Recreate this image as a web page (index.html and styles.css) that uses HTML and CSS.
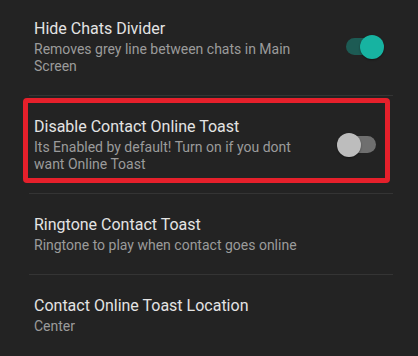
FILE: index.html
```html
<!DOCTYPE html>
<html lang="en">
<head>
<meta charset="UTF-8" />
<meta name="viewport" content="width=device-width, initial-scale=1" />
<title>Contact Online Toast Settings</title>
<link rel="stylesheet" href="styles.css">
</head>
<body>
  <div class="pref-list">
    <!-- Hide chats divider -->
    <div class="pref">
      <div class="pref-text">
        <div class="pref-title">Hide Chats Divider</div>
        <div class="pref-summary">Removes grey line between chats in Main Screen</div>
      </div>
      <div class="switch on"><div class="track"></div></div>
    </div>

    <!-- Highlighted option -->
    <div class="pref highlighted">
      <div class="pref-text">
        <div class="pref-title">Disable Contact Online Toast</div>
        <div class="pref-summary">Its Enabled by default! Turn on if you dont want Online Toast</div>
      </div>
      <div class="switch"><div class="track"></div></div>
      <div class="mark"></div>
    </div>

    <div class="pref">
      <div class="pref-text">
        <div class="pref-title">Ringtone Contact Toast</div>
        <div class="pref-summary">Ringtone to play when contact goes online</div>
      </div>
    </div>

    <div class="pref">
      <div class="pref-text">
        <div class="pref-title">Contact Online Toast Location</div>
        <div class="pref-summary">Center</div>
      </div>
    </div>
  </div>
</body>
</html>
```

FILE: styles.css
```css
/* --- Reset --- */
* {
  box-sizing: border-box;
  margin: 0;
  padding: 0;
}
html, body {
  height: 100%;
  background: #232323;
  font-family: Roboto, "Noto Sans", sans-serif;
  overflow: hidden;
}

/* --- Preference list --- */
.pref-list {
  margin: -2px 25px 0 29px;
}
.pref {
  position: relative;
  display: flex;
  align-items: center;
  padding: 21px 9px 20px 5px;
  border-bottom: 1px solid #343434;
}
.pref:last-child {
  border-bottom: none;
}
.pref-text {
  flex: 1;
  min-width: 0;
  padding-right: 16px;
}
.pref-title {
  font-size: 16px;
  line-height: 20px;
  color: #e4e4e4;
}
.pref-summary {
  margin-top: 2px;
  font-size: 14px;
  line-height: 17px;
  color: #9b9b9b;
}

/* --- Switch --- */
.switch {
  position: relative;
  flex: none;
  width: 47px;
  height: 24px;
}
.switch .track {
  position: absolute;
  left: 9px;
  top: 3px;
  width: 30px;
  height: 17px;
  border-radius: 9px;
  background: #6f6f6f;
}
.switch::after {
  content: "";
  position: absolute;
  left: 0;
  top: 0;
  width: 24px;
  height: 24px;
  border-radius: 50%;
  background: #bdbdbd;
  box-shadow: 0 1px 2px rgba(0, 0, 0, 0.4);
}
.switch.on .track { background: #1d5b54; }
.switch.on::after {
  left: 23px;
  background: #17b3a1;
}

/* --- Red annotation box --- */
.mark {
  position: absolute;
  top: 2px;
  left: -6px;
  right: 3px;
  bottom: 10px;
  border: 5px solid #e5202b;
  border-radius: 4px;
  pointer-events: none;
}
```
